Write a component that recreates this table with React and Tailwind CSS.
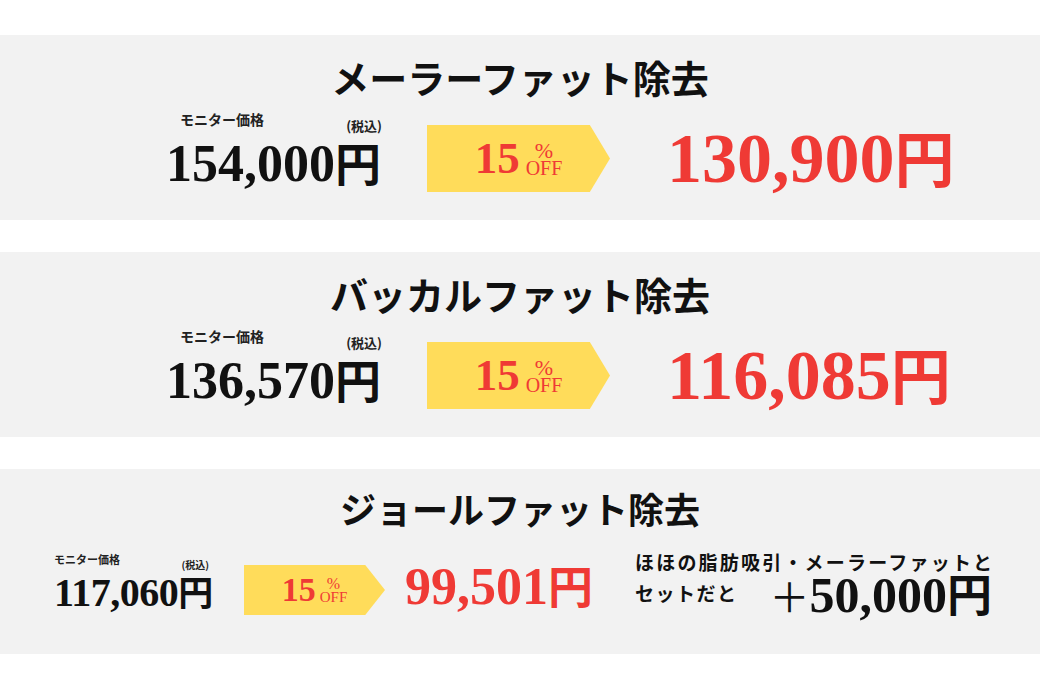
const jp = { fontFamily: '"Noto Sans CJK JP", "Noto Sans", sans-serif' }
const serif = { fontFamily: '"Liberation Serif", "Noto Sans CJK JP", serif' }

function Tag({ big }) {
  return (
    <div
      className={
        big
          ? 'bg-[#ffdc5a] w-[183px] h-[67px] flex items-center justify-center [clip-path:polygon(0_0,89%_0,100%_50%,89%_100%,0_100%)]'
          : 'bg-[#ffdc5a] w-[141px] h-[50px] flex items-center justify-center [clip-path:polygon(0_0,86%_0,100%_50%,86%_100%,0_100%)]'
      }
    >
      <div className="flex items-end text-[#ef3a35]" style={serif}>
        <span className={big ? 'text-[45px] leading-none mr-[6px] font-bold' : 'text-[34px] leading-none mr-[4px] font-bold'}>15</span>
        <span className={big ? 'flex flex-col items-center leading-none mb-[4px]' : 'flex flex-col items-center leading-none mb-[3px]'}>
          <span className={big ? 'text-[22px] leading-[17px]' : 'text-[16px] leading-[13px]'}>%</span>
          <span className={big ? 'text-[20px] leading-[18px]' : 'text-[15px] leading-[14px]'}>OFF</span>
        </span>
      </div>
    </div>
  )
}

function PriceRow({ title, before, after }) {
  return (
    <div className="bg-[#f2f2f2] h-[185px] flex flex-col">
      <h2 className="mt-[23px] text-center text-[38px] leading-[38px] font-bold text-[#111]" style={jp}>{title}</h2>
      <div className="mt-[14px] flex items-start pl-[166px]">
        <div className="w-[222px] flex flex-col">
          <div className="h-[28px] flex justify-between items-start">
            <span className="ml-[14px] mt-[2px] text-[14px] leading-none font-bold text-[#222]" style={jp}>モニター価格</span>
            <span className="mt-[9px] mr-[6px] text-[13px] leading-none font-bold text-[#222]" style={jp}>(税込)</span>
          </div>
          <div className="flex items-baseline text-[#111] font-bold">
            <span className="text-[52px] leading-none" style={serif}>{before}</span>
            <span className="text-[46px] leading-[40px]" style={jp}>円</span>
          </div>
        </div>
        <div className="ml-[39px] mt-[15px]">
          <Tag big />
        </div>
        <div className="ml-[57px] mt-[14px] flex items-baseline text-[#ef3a35] font-bold">
          <span className="text-[70px] leading-none" style={serif}>{after}</span>
          <span className="text-[60px] leading-none" style={jp}>円</span>
        </div>
      </div>
    </div>
  )
}

export default function App() {
  return (
    <main className="w-[1040px] h-[700px] bg-white pt-[35px] flex flex-col gap-[32px]">
      <PriceRow title="メーラーファット除去" before="154,000" after="130,900" />
      <PriceRow title="バッカルファット除去" before="136,570" after="116,085" />

      <div className="bg-[#f2f2f2] h-[185px] flex flex-col">
        <h2 className="mt-[21px] text-center text-[36px] leading-[36px] font-bold text-[#111]" style={jp}>ジョールファット除去</h2>
        <div className="mt-[25px] flex items-start pl-[54px]">
          <div className="w-[165px] flex flex-col">
            <div className="h-[22px] flex justify-between items-start">
              <span className="mt-[3px] text-[11px] leading-none font-bold text-[#222]" style={jp}>モニター価格</span>
              <span className="mt-[9px] mr-[10px] text-[10px] leading-none font-bold text-[#222]" style={jp}>(税込)</span>
            </div>
            <div className="flex items-baseline text-[#111] font-bold">
              <span className="text-[40px] leading-none tracking-[-0.5px]" style={serif}>117,060</span>
              <span className="text-[35px] leading-[30px]" style={jp}>円</span>
            </div>
          </div>
          <div className="ml-[25px] mt-[14px]">
            <Tag />
          </div>
          <div className="ml-[20px] mt-[10px] flex items-baseline text-[#ef3a35] font-bold">
            <span className="text-[52px] leading-none" style={serif}>99,501</span>
            <span className="text-[45px] leading-none" style={jp}>円</span>
          </div>
          <div className="ml-[42px] flex flex-col text-[#111]">
            <p className="text-[19px] leading-[22px] font-bold tracking-[2.2px]" style={jp}>ほほの脂肪吸引・メーラーファットと</p>
            <div className="flex items-start">
              <span className="mt-[9px] text-[19px] leading-[22px] font-bold tracking-[1.5px]" style={jp}>セットだと</span>
              <span className="ml-[32px] mt-[-2px] flex items-baseline font-bold">
                <span className="text-[40px] leading-[44px] font-normal" style={jp}>＋</span>
                <span className="text-[50px] leading-[44px]" style={serif}>50,000</span>
                <span className="text-[45px] leading-[44px]" style={jp}>円</span>
              </span>
            </div>
          </div>
        </div>
      </div>
    </main>
  )
}
